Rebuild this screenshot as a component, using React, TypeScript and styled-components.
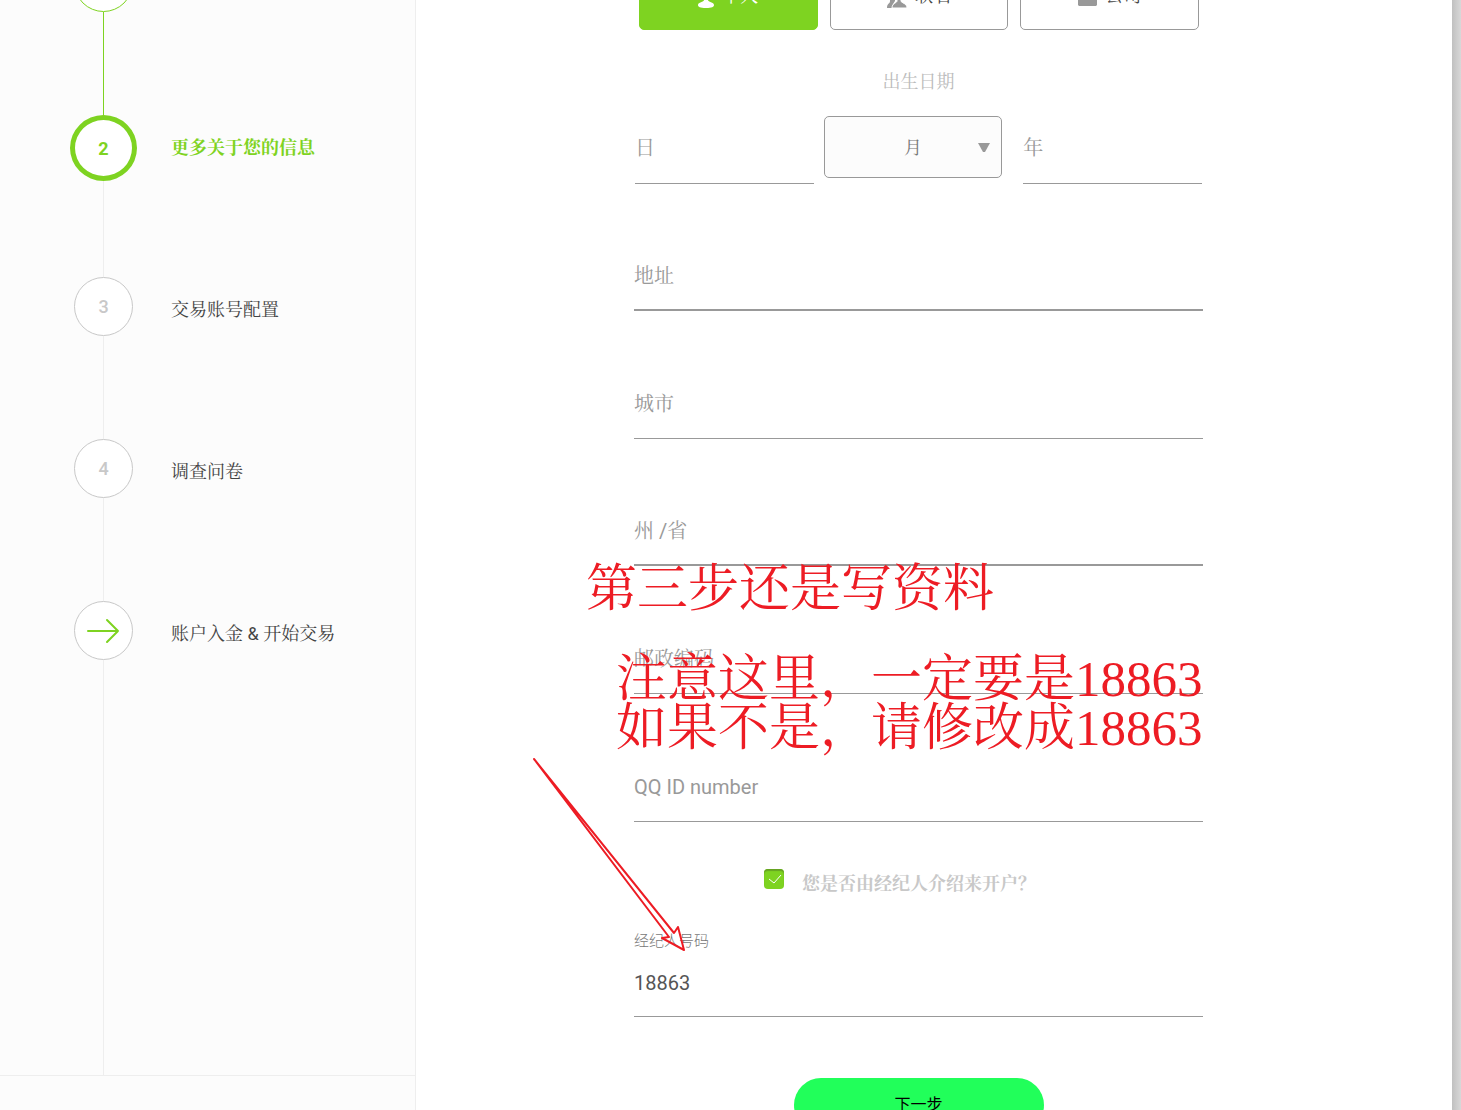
import React, { useState } from "react";
import styled, { createGlobalStyle } from "styled-components";

const green = "#7ed321";
const grey = "#999999";
const sans = `Roboto, "Noto Sans CJK SC", sans-serif`;
const song = `Roboto, "Noto Serif CJK SC", "Noto Sans CJK SC", serif`;

const GlobalStyle = createGlobalStyle`
  *, *::before, *::after { box-sizing: border-box; }
  body { margin: 0; background: #fff; font-family: ${song}; color: #555; }
  button, input, select { font-family: inherit; }
`;

const Page = styled.div`
  display: flex;
  height: 100vh;
  overflow: hidden;
`;

const Sidebar = styled.aside`
  display: flex;
  flex-direction: column;
  flex: 0 0 416px;
  background: #fcfcfc;
  border-right: 1px solid #eeeeee;
`;

const Steps = styled.ol`
  display: flex;
  flex-direction: column;
  flex: 1;
  list-style: none;
  margin: -47px 0 0;
  padding: 0 0 0 69px;
`;

const SidebarFooter = styled.div`
  height: 35px;
  border-top: 1px solid #eeeeee;
`;

const StepItem = styled.li`
  display: flex;
  gap: 33px;
  min-height: 162px;
  &:last-child { flex: 1; }
`;

const Track = styled.div`
  display: flex;
  flex-direction: column;
  align-items: center;
  width: 69px;
`;

type StepState = "done" | "active" | "todo";

const Marker = styled.span<{ $state: StepState }>`
  display: flex;
  align-items: center;
  justify-content: center;
  flex: none;
  width: ${(p) => (p.$state === "active" ? 67 : 59)}px;
  height: ${(p) => (p.$state === "active" ? 66 : 59)}px;
  border: ${(p) => (p.$state === "active" ? 5 : 1)}px solid ${(p) => (p.$state === "todo" ? "#c8c8c8" : green)};
  border-radius: 50%;
  background: #fff;
  color: ${(p) => (p.$state === "todo" ? "#c8c8c8" : green)};
  font-size: 18px;
  font-weight: ${(p) => (p.$state === "active" ? 700 : 500)};
`;

const Connector = styled.span<{ $done: boolean }>`
  flex: 1;
  width: 1px;
  background: ${(p) => (p.$done ? green : "#eeeeee")};
`;

const StepLabel = styled.span<{ $active: boolean }>`
  font-size: 18px;
  line-height: 66px;
  font-weight: ${(p) => (p.$active ? 700 : 400)};
  color: ${(p) => (p.$active ? green : "#444444")};
`;

const Main = styled.main`
  flex: 1;
  padding-right: 31px;
`;

const Edge = styled.div`
  flex: 0 0 9px;
  background: linear-gradient(to right, #c0c0c0, #d8d8d8);
`;

const Form = styled.form`
  position: relative;
  display: flex;
  flex-direction: column;
  max-width: 569px;
  margin: -42px auto 0;
`;

const TypeRow = styled.div`
  display: flex;
  gap: 12px;
  padding: 0 4px 0 5px;
`;

const TypeButton = styled.button<{ $selected: boolean }>`
  display: flex;
  align-items: center;
  justify-content: center;
  gap: 8px;
  flex: 1;
  height: 72px;
  padding: 0;
  border: 1px solid ${(p) => (p.$selected ? green : grey)};
  border-radius: 5px;
  background: ${(p) => (p.$selected ? green : "#fff")};
  color: ${(p) => (p.$selected ? "#fff" : "#444444")};
  font-size: 18px;
  font-weight: 400;
  svg {
    margin-top: 4px;
    fill: ${(p) => (p.$selected ? "#fff" : grey)};
  }
`;

const DateGroup = styled.fieldset`
  min-width: 0;
  margin: 0;
  padding: 0 1px;
  border: 0;
`;

const DateTitle = styled.legend`
  width: 100%;
  padding: 36px 0 14px;
  text-align: center;
  font-size: 18px;
  line-height: 32px;
  font-weight: 400;
  color: #bbbbbb;
`;

const DateRow = styled.div`
  display: flex;
  align-items: flex-end;
  gap: 10px;
`;

const DateCell = styled.div<{ $spaced?: boolean }>`
  flex: 1 1 0;
  margin-left: ${(p) => (p.$spaced ? 11 : 0)}px;
`;

const LineInput = styled.input<{ $height?: number; $thick?: boolean }>`
  display: block;
  width: 100%;
  height: ${(p) => p.$height ?? (p.$thick ? 68 : 70)}px;
  padding: 0;
  border: 0;
  border-bottom: ${(p) => (p.$thick ? 2 : 1)}px solid ${grey};
  border-radius: 0;
  outline: 0;
  background: transparent;
  color: #555555;
  font-size: 20px;
  font-weight: 400;
  &::placeholder { color: ${grey}; opacity: 1; }
`;

const SelectBox = styled.div`
  position: relative;
  flex: 1 1 0;
  margin-bottom: 6px;
  svg {
    position: absolute;
    right: 12px;
    top: 27px;
    pointer-events: none;
    fill: ${grey};
  }
`;

const MonthSelect = styled.select`
  display: block;
  appearance: none;
  width: 100%;
  height: 62px;
  padding: 0;
  border: 1px solid ${grey};
  border-radius: 5px;
  background: #fcfcfc;
  color: #777777;
  font-size: 18px;
  font-weight: 400;
  text-align: center;
  text-align-last: center;
`;

const Field = styled.div<{ $thick?: boolean }>`
  display: flex;
  align-items: flex-end;
  height: ${(p) => (p.$thick ? 127 : 128)}px;
`;

const CheckRow = styled.label`
  display: flex;
  align-items: flex-start;
  justify-content: center;
  gap: 18px;
  margin-top: 47px;
  padding-right: 37px;
  font-size: 18px;
  line-height: 30px;
  font-weight: 700;
  color: #c8c8c8;
`;

const CheckBox = styled.span`
  display: grid;
  width: 20px;
  height: 20px;
  > * { grid-area: 1 / 1; }
  svg { pointer-events: none; }
`;

const Check = styled.input`
  appearance: none;
  width: 20px;
  height: 20px;
  margin: 0;
  border-radius: 4px;
  background: #ffffff;
  box-shadow: inset 0 0 0 1px ${grey};
  &:checked {
    background: ${green};
    box-shadow: inset 0 2px 1px #66a322;
  }
`;

const BrokerLabel = styled.label`
  margin-top: 33px;
  font-family: ${sans};
  font-size: 15px;
  line-height: 18px;
  font-weight: 300;
  color: #777777;
`;

const NextButton = styled.button`
  align-self: center;
  flex: none;
  width: 250px;
  height: 54px;
  margin-top: 61px;
  padding: 0 0 4px;
  border: 0;
  border-radius: 27px;
  background: #21ff5a;
  color: #000;
  font-family: ${sans};
  font-size: 16px;
  font-weight: 400;
`;

const Note = styled.p<{ $x: number; $y: number }>`
  position: absolute;
  left: ${(p) => p.$x}px;
  top: ${(p) => p.$y}px;
  margin: 0;
  white-space: nowrap;
  pointer-events: none;
  font-family: "Liberation Serif", "Noto Serif CJK SC", "Noto Sans CJK SC", serif;
  font-size: 51px;
  line-height: 49px;
  font-weight: 400;
  color: #ed1c24;
`;

const NoteArrow = styled.svg`
  position: absolute;
  left: -102px;
  top: 799px;
  pointer-events: none;
`;

const PersonIcon = () => (
  <svg width="16" height="24" viewBox="0 0 16 24" aria-hidden="true">
    <ellipse cx="8" cy="7" rx="5" ry="6" />
    <path d="M6 11h4v5c0 2 6 2 6 5 0 2-2 3-8 3s-8-1-8-3c0-3 6-3 6-5z" />
  </svg>
);

const GroupIcon = () => (
  <svg width="20" height="24" viewBox="0 0 20 24" aria-hidden="true">
    <path d="M6 4c3 0 4 2 4 5 0 2-1 4-2 5v3l-2 3-1 4H0c0-5 3-4 3-7v-3c-1-1-2-3-2-5 0-3 2-5 5-5z" />
    <path d="M12 3c3 0 4 3 4 6 0 2-1 4-2 5v3c0 2 6 2 6 7H5c0-5 5-5 5-7v-3c-1-1-2-3-2-5 0-3 1-6 4-6z" stroke="#fff" strokeWidth="1" />
  </svg>
);

const CaseIcon = () => (
  <svg width="19" height="24" viewBox="0 0 19 24" aria-hidden="true">
    <path d="M6 7V3h7v4h5l1 1v13l-1 1H1l-1-1V8l1-1zm2 0h3V5H8z" />
  </svg>
);

const ArrowIcon = () => (
  <svg width="34" height="26" viewBox="0 0 34 26" fill="none" stroke={green} strokeWidth="2" strokeLinecap="round" strokeLinejoin="round" aria-hidden="true">
    <path d="M1 13h30M20 2l11 11-11 11" />
  </svg>
);

const steps: { label: string; mark: React.ReactNode; state: StepState }[] = [
  { label: "", mark: null, state: "done" },
  { label: "更多关于您的信息", mark: "2", state: "active" },
  { label: "交易账号配置", mark: "3", state: "todo" },
  { label: "调查问卷", mark: "4", state: "todo" },
  { label: "账户入金 & 开始交易", mark: <ArrowIcon />, state: "todo" },
];

const accountTypes = [
  { name: "个人", icon: <PersonIcon /> },
  { name: "联名", icon: <GroupIcon /> },
  { name: "公司", icon: <CaseIcon /> },
];

const fields = [
  { name: "地址", thick: true },
  { name: "城市" },
  { name: "州 /省", thick: true },
  { name: "邮政编码" },
  { name: "QQ ID number" },
];

export default function App() {
  const [type, setType] = useState("个人");
  const [broker, setBroker] = useState(true);

  return (
    <>
      <GlobalStyle />
      <Page>
        <Sidebar>
          <Steps>
            {steps.map((s, i) => (
              <StepItem key={i}>
                <Track>
                  <Marker $state={s.state}>{s.mark}</Marker>
                  <Connector $done={s.state === "done"} />
                </Track>
                <StepLabel $active={s.state === "active"}>{s.label}</StepLabel>
              </StepItem>
            ))}
          </Steps>
          <SidebarFooter />
        </Sidebar>
        <Main>
          <Form onSubmit={(e) => e.preventDefault()}>
            <TypeRow>
              {accountTypes.map((t) => (
                <TypeButton key={t.name} type="button" $selected={t.name === type} onClick={() => setType(t.name)}>
                  {t.icon}
                  {t.name}
                </TypeButton>
              ))}
            </TypeRow>
            <DateGroup>
              <DateTitle>出生日期</DateTitle>
              <DateRow>
                <DateCell>
                  <LineInput $height={72} placeholder="日" aria-label="日" />
                </DateCell>
                <SelectBox>
                  <MonthSelect aria-label="月" defaultValue="">
                    <option value="">月</option>
                    {Array.from({ length: 12 }, (_, i) => (
                      <option key={i} value={i + 1}>{i + 1}</option>
                    ))}
                  </MonthSelect>
                  <svg width="12" height="10" viewBox="0 0 12 10" aria-hidden="true">
                    <path d="M0 0h12L7 9H5z" />
                  </svg>
                </SelectBox>
                <DateCell $spaced>
                  <LineInput $height={72} placeholder="年" aria-label="年" />
                </DateCell>
              </DateRow>
            </DateGroup>
            {fields.map((f) => (
              <Field key={f.name} $thick={f.thick}>
                <LineInput $thick={f.thick} placeholder={f.name} aria-label={f.name} />
              </Field>
            ))}
            <CheckRow>
              <CheckBox>
                <Check type="checkbox" checked={broker} onChange={(e) => setBroker(e.target.checked)} />
                <svg width="20" height="20" viewBox="0 0 20 20" fill="none" stroke="#fff" aria-hidden="true">
                  <path d="M5 10l5 4 7-8" />
                </svg>
              </CheckBox>
              您是否由经纪人介绍来开户？
            </CheckRow>
            <BrokerLabel htmlFor="broker">经纪人号码</BrokerLabel>
            <LineInput id="broker" $height={67} defaultValue="18863" />
            <NextButton type="submit">下一步</NextButton>

            <Note $x={-48} $y={607}>第三步还是写资料</Note>
            <Note $x={-18} $y={697}>
              注意这里，一定要是18863
              <br />
              如果不是，请修改成18863
            </Note>
            <NoteArrow width="156" height="196" viewBox="0 0 156 196" fill="none" stroke="#ed1c24" strokeWidth="2" strokeLinejoin="round" aria-hidden="true">
              <path d="M2 2L137 180l-7 1 22 12-6-23-4 6z" />
            </NoteArrow>
          </Form>
        </Main>
        <Edge />
      </Page>
    </>
  );
}
